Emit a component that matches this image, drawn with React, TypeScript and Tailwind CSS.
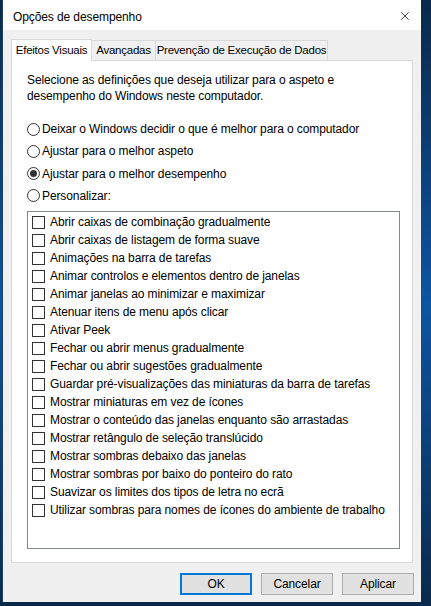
import { X } from "lucide-react";

const options = [
  "Deixar o Windows decidir o que é melhor para o computador",
  "Ajustar para o melhor aspeto",
  "Ajustar para o melhor desempenho",
  "Personalizar:",
];

const effects = [
  "Abrir caixas de combinação gradualmente",
  "Abrir caixas de listagem de forma suave",
  "Animações na barra de tarefas",
  "Animar controlos e elementos dentro de janelas",
  "Animar janelas ao minimizar e maximizar",
  "Atenuar itens de menu após clicar",
  "Ativar Peek",
  "Fechar ou abrir menus gradualmente",
  "Fechar ou abrir sugestões gradualmente",
  "Guardar pré-visualizações das miniaturas da barra de tarefas",
  "Mostrar miniaturas em vez de ícones",
  "Mostrar o conteúdo das janelas enquanto são arrastadas",
  "Mostrar retângulo de seleção translúcido",
  "Mostrar sombras debaixo das janelas",
  "Mostrar sombras por baixo do ponteiro do rato",
  "Suavizar os limites dos tipos de letra no ecrã",
  "Utilizar sombras para nomes de ícones do ambiente de trabalho",
];

const Radio = ({ checked }: { checked?: boolean }) => (
  <span className="w-[13px] h-[13px] rounded-full border border-[#333333] bg-white flex items-center justify-center shrink-0">
    {checked && <span className="w-[7px] h-[7px] rounded-full bg-[#333333]" />}
  </span>
);

export default function App() {
  return (
    <div
      className="w-[431px] h-[606px] bg-linear-to-b from-[#0a2a4b] via-[#0b55a3] to-[#0a2a4b] pl-[2px] text-[12px] tracking-[-0.1px] text-black"
      style={{ fontFamily: "'Segoe UI', 'Liberation Sans', Arial, sans-serif" }}
    >
      <div className="w-[419px] h-[602px] bg-[#f0f0f0] flex flex-col border-l border-[#1f3f66]">
        {/* Title bar */}
        <div className="h-[30px] bg-white flex items-center justify-between pl-[10px] pr-[9px]">
          <span className="mt-[3px]">Opções de desempenho</span>
          <X size={14} strokeWidth={1.2} className="text-black mt-[2px]" />
        </div>

        {/* Tabs */}
        <div className="flex items-end pl-[8px] mt-[8px] h-[22px] whitespace-nowrap text-[11.5px] tracking-[-0.25px]">
          <div className="h-[22px] w-[81px] bg-white border border-b-0 border-[#d9d9d9] flex items-center justify-center relative top-[1px]">
            Efeitos Visuais
          </div>
          <div className="h-[20px] w-[64px] bg-[#f0f0f0] border border-b-0 border-l-0 border-[#d9d9d9] flex items-center justify-center">
            Avançadas
          </div>
          <div className="h-[20px] w-[172px] bg-[#f0f0f0] border border-b-0 border-l-0 border-[#d9d9d9] flex items-center justify-center">
            Prevenção de Execução de Dados
          </div>
        </div>

        {/* Panel */}
        <div className="ml-[8px] w-[402px] h-[503px] bg-white border border-[#d9d9d9] pt-[11px] px-[15px] flex flex-col">
          <p className="leading-[16px]">
            Selecione as definições que deseja utilizar para o aspeto e
            <br />
            desempenho do Windows neste computador.
          </p>

          <div className="mt-[14px] flex flex-col">
            {options.map((o, i) => (
              <div key={o} className={`flex items-center gap-[2px] ${i === 0 ? "h-[22px]" : "h-[22.4px]"}`}>
                <Radio checked={i === 2} />
                <span>{o}</span>
              </div>
            ))}
          </div>

          <div className="mt-[4px] w-[373px] h-[338px] border border-[#828790] bg-white pt-[1px] flex flex-col">
            {effects.map((e) => (
              <div key={e} className="flex items-center h-[18px] pl-[4px] gap-[5px]">
                <span className="w-[13px] h-[13px] border border-[#333333] bg-white shrink-0" />
                <span>{e}</span>
              </div>
            ))}
          </div>
        </div>

        {/* Buttons */}
        <div className="flex justify-end gap-[9px] pr-[7px] mt-[10px]">
          <button className="w-[72px] h-[22px] bg-[#e1e1e1] border-2 border-[#0078d7]">OK</button>
          <button className="w-[72px] h-[22px] bg-[#e1e1e1] border border-[#adadad]">Cancelar</button>
          <button className="w-[72px] h-[22px] bg-[#e1e1e1] border border-[#adadad]">Aplicar</button>
        </div>
      </div>
    </div>
  );
}
